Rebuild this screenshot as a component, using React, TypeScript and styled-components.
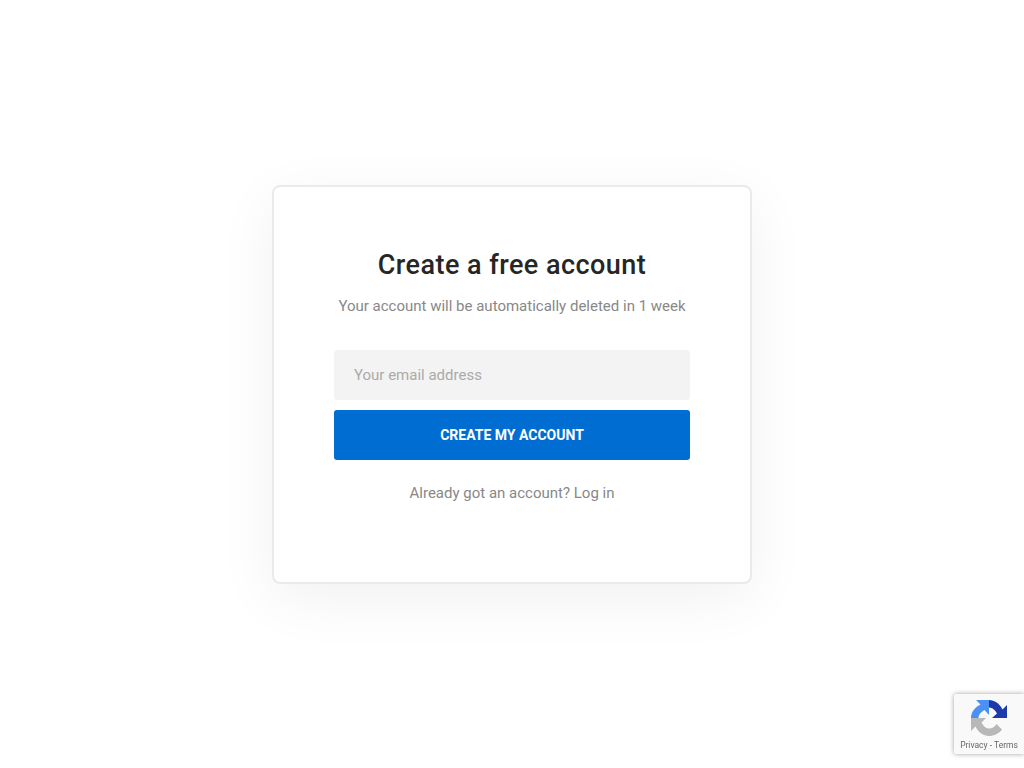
import React from "react";
import styled, { createGlobalStyle } from "styled-components";

const GlobalStyle = createGlobalStyle`
	html, body {
		margin: 0;
		padding: 0;
		background: #fff;
		font-family: Roboto, "Liberation Sans", sans-serif;
	}
`;

const Page = styled.div`
	display: flex;
	align-items: center;
	justify-content: center;
	width: 100%;
	height: 768px;
	overflow: hidden;
`;

const Card = styled.div`
	display: flex;
	flex-direction: column;
	align-items: center;
	box-sizing: border-box;
	width: 480px;
	height: 399px;
	padding: 61px 60px 0;
	background: #fff;
	border: 2px solid #eaeaea;
	border-radius: 8px;
	box-shadow: 0 15px 60px rgba(0, 0, 0, 0.06);
`;

const Title = styled.h1`
	margin: 0;
	font-size: 27px;
	line-height: 34px;
	font-weight: 500;
	letter-spacing: 0.45px;
	color: #262626;
`;

const Subtitle = styled.p`
	margin: 13px 0 0;
	font-size: 15px;
	line-height: 22px;
	color: #888;
`;

const EmailInput = styled.input`
	box-sizing: border-box;
	width: 356px;
	height: 50px;
	margin-top: 33px;
	padding: 0 20px;
	background: #f3f3f3;
	border: 0;
	border-radius: 3px;
	outline: none;
	font-family: inherit;
	font-size: 15px;
	color: #333;
	&::placeholder {
		color: #aaa;
		opacity: 1;
	}
`;

const SubmitButton = styled.button`
	width: 356px;
	height: 50px;
	margin-top: 10px;
	background: #006dd3;
	border: 0;
	border-radius: 3px;
	font-family: inherit;
	font-size: 14px;
	font-weight: 700;
	text-transform: uppercase;
	color: #fff;
`;

const LoginNote = styled.p`
	margin: 22px 0 0;
	font-size: 15px;
	line-height: 22px;
	color: #888;
`;

const Badge = styled.div`
	position: fixed;
	right: 0;
	bottom: 14px;
	display: flex;
	flex-direction: column;
	align-items: center;
	box-sizing: border-box;
	width: 70px;
	height: 60px;
	padding-top: 6px;
	background: #f9f9f9;
	border-radius: 2px 0 0 2px;
	box-shadow: 0 0 5px rgba(128, 128, 128, 0.75);
`;

const BadgeLinks = styled.div`
	margin-top: 3px;
	font-family: Roboto, "Liberation Sans", sans-serif;
	font-size: 8.5px;
	line-height: 12px;
	white-space: nowrap;
	color: #666;
`;

const RecaptchaLogo = () => (
	<svg width="36" height="36" viewBox="0 0 36 36" style={{ display: "block" }}>
		<path
			d="M18 0 C23.5 0 28.5 3.5 31.5 9.5 L36 5 L36 18 L21 18 L26 13.5 C24.5 10.5 21.5 7.5 18 7.5 Z"
			fill="#1c3aa9"
		/>
		<path
			d="M0 18 C0 12.5 3.5 7.5 9.5 4.5 L5 0 L18 0 L18 15 L13.5 10 C10.5 11.5 7.5 14.5 7.5 18 Z"
			fill="#4a90f5"
		/>
		<path
			d="M0 18 L15 18 L10.5 22.5 C12 25.5 15 28.5 18 28.5 C21.5 28.5 24 26.5 25.5 24 L31 29.5 C28 33.5 23 36 18 36 C12.5 36 7.5 32.5 4.5 26.5 L0 31 Z"
			fill="#b8b8b8"
		/>
	</svg>
);

const App = () => {
	return (
		<>
			<GlobalStyle />
			<Page>
				<Card>
					<Title>Create a free account</Title>
					<Subtitle>Your account will be automatically deleted in 1 week</Subtitle>
					<EmailInput placeholder="Your email address" />
					<SubmitButton>Create my account</SubmitButton>
					<LoginNote>Already got an account? Log in</LoginNote>
				</Card>
			</Page>
			<Badge>
				<RecaptchaLogo />
				<BadgeLinks>Privacy - Terms</BadgeLinks>
			</Badge>
		</>
	);
};

export default App;
